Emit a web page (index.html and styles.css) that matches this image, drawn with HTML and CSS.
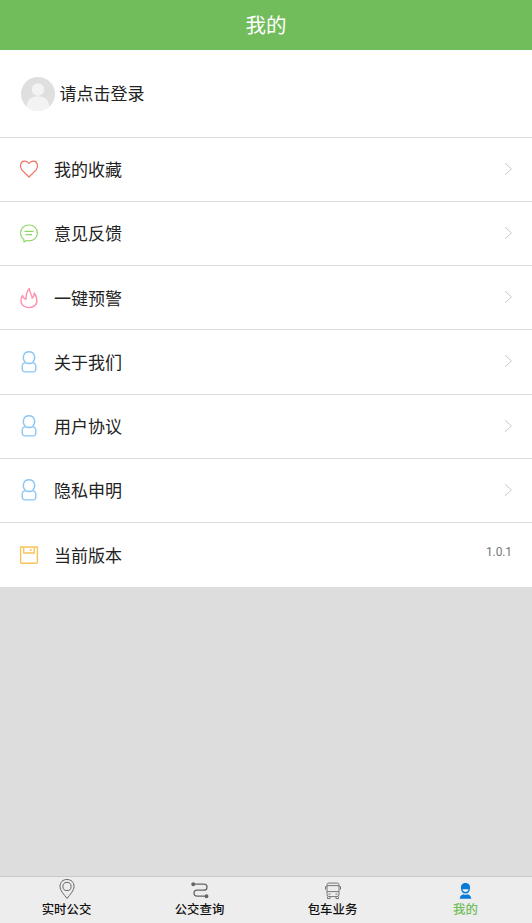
FILE: index.html
```html
<!DOCTYPE html>
<html lang="zh-CN">
<head>
<meta charset="utf-8">
<title>我的</title>
<link rel="stylesheet" href="styles.css">
</head>
<body>
<svg class="symbols" aria-hidden="true">
  <symbol id="chevron" viewBox="0 0 10 14"><path d="M2 1.2l6.500 5.8-6.500 5.8"/></symbol>
  <symbol id="person" viewBox="0 0 20 24"><path d="M6.400 12.600C2.800 8.500 4 1.700 10 1.700S17.200 8.500 13.600 12.600C11.800 13.800 8.200 13.800 6.400 12.600ZM6.400 12.600C4 13 3.200 14.300 3.200 16.500V18.500C3.200 21 4 21.900 6 21.900H14C16 21.900 16.800 21 16.800 18.500V16.500C16.800 14.300 16 13 13.600 12.600"/></symbol>
</svg>
<header class="header">我的</header>
<main class="content">
  <section class="login">
    <svg class="avatar" viewBox="0 0 34 34"><defs><clipPath id="round"><circle cx="17" cy="17" r="17"/></clipPath></defs><circle cx="17" cy="17" r="17" fill="#dfdfdf"/><g fill="#f3f3f3" clip-path="url(#round)"><circle cx="17" cy="12.500" r="6.200"/><path d="M5.500 34V30C6 22.500 11 19.300 17 19.300S28 22.500 28.500 30V34Z"/></g></svg>
    <span>请点击登录</span>
  </section>
  <nav class="menu">
    <a class="row"><svg class="icon red" viewBox="0 0 20 24"><path d="M10 20L2.800 12.800C.2 9.500 1.500 4.500 5.300 4.100C7.300 3.900 9 4.800 10 6.500C11 4.800 12.700 3.900 14.700 4.100C18.500 4.500 19.800 9.500 17.200 12.800Z"/></svg><span class="label">我的收藏</span><svg class="chevron"><use href="#chevron"/></svg></a>
    <a class="row"><svg class="icon green" viewBox="0 0 20 24"><path d="M4.800 18.300C2.500 16.900 1.600 14.600 1.600 12C1.600 7.500 5 4 10 4S18.400 7.500 18.400 12S15 19.800 10 19.800C9 19.800 8.200 19.700 7.400 19.500L5 21ZM5.500 10.300H14.500M6.500 13.700H13"/></svg><span class="label">意见反馈</span><svg class="chevron"><use href="#chevron"/></svg></a>
    <a class="row"><svg class="icon pink" viewBox="0 0 20 24"><path d="M3.600 9.500C1.300 13 1.300 17.500 4.300 19.800C7.500 22.200 12.800 22.200 15.800 19.600C19.200 16.500 17.900 10.500 15.300 7C15.300 9.200 14.700 11 13.200 12.200C13.500 10 10.300 6.500 10.400 2.500C7.500 5.200 7 9 7 13.200C5.200 12.700 3.900 11.500 3.600 9.500Z"/></svg><span class="label">一键预警</span><svg class="chevron"><use href="#chevron"/></svg></a>
    <a class="row"><svg class="icon blue"><use href="#person"/></svg><span class="label">关于我们</span><svg class="chevron"><use href="#chevron"/></svg></a>
    <a class="row"><svg class="icon blue"><use href="#person"/></svg><span class="label">用户协议</span><svg class="chevron"><use href="#chevron"/></svg></a>
    <a class="row"><svg class="icon blue"><use href="#person"/></svg><span class="label">隐私申明</span><svg class="chevron"><use href="#chevron"/></svg></a>
    <div class="row"><svg class="icon orange" viewBox="0 0 20 24"><path d="M1.600 4H18.400V19C18.400 19.800 18 20.200 17.200 20.200H2.800C2 20.200 1.600 19.800 1.600 19ZM4.700 4V10H15.300V4M11.700 5.800V8"/></svg><span class="label">当前版本</span><span class="version">1.0.1</span></div>
  </nav>
</main>
<footer class="tabs">
  <a class="tab"><svg viewBox="0 0 20 22"><path d="M10 20.500C7 16.500 3 12.500 3 8.500C3 4 6 1.500 10 1.500S17 4 17 8.500C17 12.500 13 16.500 10 20.500Z"/><circle cx="10" cy="8.500" r="4.100"/></svg><span>实时公交</span></a>
  <a class="tab"><svg class="route" viewBox="0 0 20 22"><path d="M3.200 6.200H14C18 6.200 18 12.200 14 12.200H7C3 12.200 3 18.200 7 18.200H16"/><circle class="dot" cx="3.200" cy="6.200" r="1.300"/><circle class="dot" cx="16.500" cy="18.200" r="1.300"/></svg><span>公交查询</span></a>
  <a class="tab"><svg class="bus" viewBox="0 0 20 22"><g transform="translate(0 .6)"><path d="M4 15.500V6C4 4.800 4.800 4.500 6 4.500H14C15.200 4.500 16 4.800 16 6V15.500Q16 18 14 18H6Q4 18 4 15.500ZM4 7H16M4 13H16M3.800 8H2.500V11M16.200 8H17.500V11M4.500 18V20H7V18M13 18V20H15.500V18M5.500 15.500H7.500M12.500 15.500H14.500"/></g></svg><span>包车业务</span></a>
  <a class="tab active"><svg viewBox="0 0 20 22"><g transform="translate(-.5 1)"><path class="solid" d="M10 4C6.500 4 5.200 6.300 5.500 9.200C5.700 12.500 7.200 14.500 10 14.500S14.300 12.500 14.500 9.200C14.800 6.300 13.500 4 10 4ZM4.200 19.700C4.500 16.700 6.400 15.500 8 15.200C9.300 16 10.700 16 12 15.200C13.600 15.500 15.500 16.700 15.800 19.700Z"/><path class="smile" d="M7 10.200H13C12.800 12.200 11.500 12.900 10 12.900S7.200 12.200 7 10.200Z"/></g></svg><span>我的</span></a>
</footer>
</body>
</html>
```
FILE: styles.css
```css
* { box-sizing: border-box; }
body {
  margin: 0;
  height: 923px;
  display: flex;
  flex-direction: column;
  background: #ddd;
  color: #222;
  font-family: Roboto, "Noto Sans CJK SC", sans-serif;
  overflow: hidden;
}
.symbols { display: none; }
svg { fill: none; flex-shrink: 0; }
.header {
  height: 50px;
  background: #71bc5b;
  color: #fff;
  font-size: 20.5px;
  line-height: 52px;
  text-align: center;
}
.content { flex: 1; }
.login {
  height: 86.500px;
  padding: 0 20.5px;
  display: flex;
  align-items: center;
  gap: 5px;
  background: #fff;
  font-size: 17px;
}
.login span { margin-top: -1px; }
.avatar { width: 34px; height: 34px; margin-top: 1px; }
.menu { background: #fff; }
.row {
  height: 64.25px;
  padding: 0 19px 1px;
  border-top: 1px solid #dcdcdc;
  display: flex;
  align-items: center;
  font-size: 17px;
}
.row:last-child { height: 65px; }
.icon { width: 20px; height: 24px; margin: 1px 15px 0 0; stroke-width: 1.2; stroke-linejoin: round; }
.label { flex: 1; }
.red { stroke: #ef7265; }
.green { stroke: #8fd568; }
.pink { stroke: #ff91ad; stroke-width: 1.4; }
.blue { stroke: #8bc8f5; stroke-width: 1.4; }
.orange { stroke: #f8c35b; stroke-width: 1.4; }
.chevron { width: 10px; height: 14px; stroke: #c8c8c8; stroke-width: 1; }
.version { margin: -6px 1px 0 0; color: #777; font-size: 12px; letter-spacing: -.1px; }
.tabs {
  height: 47px;
  border-top: 1px solid #c9c9c9;
  background: #ededed;
  display: grid;
  grid-template-columns: repeat(4, 1fr);
}
.tab {
  display: flex;
  flex-direction: column;
  align-items: center;
  padding-top: 1px;
  color: #111;
  font-size: 12.400px;
  font-weight: 500;
  line-height: 20px;
}
.tab svg { width: 20px; height: 22px; stroke: #666; stroke-width: 1; }
.tab .route { stroke-width: 1.3; }
.tab .bus { stroke: #777; }
.dot { fill: #4d5e51; }
.tab.active { color: #72bd5c; }
.tab .solid { fill: #087bd8; stroke: none; }
.tab .smile { fill: #ededed; stroke: none; }
```
